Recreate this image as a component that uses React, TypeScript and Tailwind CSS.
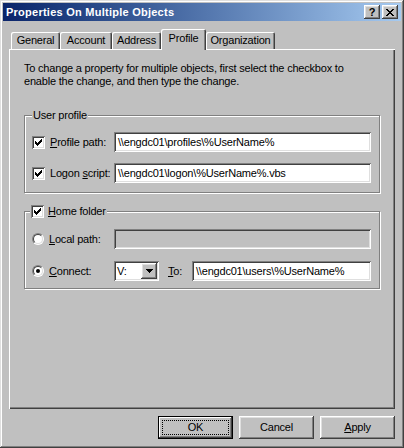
const raised =
  "shadow-[inset_-1px_-1px_0_#404040,inset_1px_1px_0_#fff,inset_-2px_-2px_0_#808080,inset_2px_2px_0_#dfdfdf]";
const sunken =
  "shadow-[inset_1px_1px_0_#808080,inset_-1px_-1px_0_#fff,inset_2px_2px_0_#404040,inset_-2px_-2px_0_#dfdfdf]";

function Check() {
  return (
    <span className={`flex h-[13px] w-[13px] shrink-0 items-center justify-center bg-white ${sunken}`}>
      <svg width="7" height="7" viewBox="0 0 7 7" shapeRendering="crispEdges">
        {[2, 3, 4, 3, 2, 1, 0].map((y, x) => (
          <rect key={x} x={x} y={y} width="1" height="3" fill="#000" />
        ))}
      </svg>
    </span>
  );
}

function Radio({ on }: { on?: boolean }) {
  return (
    <span className="flex h-[12px] w-[12px] shrink-0 items-center justify-center rounded-full border border-t-[#808080] border-l-[#808080] border-b-white border-r-white bg-[#dfdfdf]">
      <span className="flex h-[10px] w-[10px] items-center justify-center rounded-full border border-t-[#404040] border-l-[#404040] border-b-[#dfdfdf] border-r-[#dfdfdf] bg-white">
        {on && <span className="h-[4px] w-[4px] rounded-full bg-black" />}
      </span>
    </span>
  );
}

function Field({ value, width, disabled }: { value?: string; width: string; disabled?: boolean }) {
  return (
    <div
      className={`flex h-[20px] items-center px-[4px] whitespace-nowrap ${width} ${sunken} ${
        disabled ? "bg-[#c0c0c0]" : "bg-white"
      }`}
    >
      {value}
    </div>
  );
}

function Tab({ label, width, active }: { label: string; width: string; active?: boolean }) {
  return (
    <div
      className={`flex justify-center rounded-t-[2px] bg-[#c0c0c0] shadow-[inset_1px_1px_0_#fff,inset_-1px_0_0_#404040,inset_-2px_0_0_#808080] ${width} ${
        active ? "relative z-10 -mb-px h-[21px] pt-[3px]" : "h-[17px] pt-[2px]"
      }`}
    >
      {label}
    </div>
  );
}

function Button({ children, primary }: { children: React.ReactNode; primary?: boolean }) {
  return (
    <div
      className={`relative flex h-[23px] w-[75px] items-center justify-center ${
        primary
          ? "border border-black shadow-[inset_-1px_-1px_0_#404040,inset_1px_1px_0_#fff,inset_-2px_-2px_0_#808080]"
          : raised
      }`}
    >
      {children}
      {primary && <span className="absolute inset-[3px] border border-dotted border-black" />}
    </div>
  );
}

export default function App() {
  return (
    <div className="h-[448px] w-[404px] bg-[#c0c0c0] p-[3px] font-['Liberation_Sans',Arial,sans-serif] text-[11px] leading-[13px] tracking-[-0.2px] text-black shadow-[inset_-1px_-1px_0_#404040,inset_1px_1px_0_#dfdfdf,inset_-2px_-2px_0_#808080,inset_2px_2px_0_#fff]">
      {/* title bar */}
      <div className="flex h-[18px] items-center bg-linear-to-r from-[#0a246a] to-[#a6caf0] pl-[3px] pr-[3px]">
        <span className="flex-1 text-[11px] font-bold tracking-[0.25px] text-white">Properties On Multiple Objects</span>
        <div className="flex gap-[2px]">
          <div className={`flex h-[14px] w-[16px] items-center justify-center bg-[#c0c0c0] text-[11px] font-bold ${raised}`}>
            ?
          </div>
          <div className={`flex h-[14px] w-[16px] items-center justify-center bg-[#c0c0c0] ${raised}`}>
            <svg width="8" height="7" viewBox="0 0 8 7" shapeRendering="crispEdges">
              <path d="M0 0h2v1h1v1h2v-1h1v-1h2v1h-1v1h-1v1h-1v1h1v1h1v1h1v1h-2v-1h-1v-1h-2v1h-1v1h-2v-1h1v-1h1v-1h1v-1h-1v-1h-1v-1h-1z" fill="#000" />
            </svg>
          </div>
        </div>
      </div>

      <div className="pl-[6px] pt-[8px]">
        {/* tabs */}
        <div className="flex h-[20px] items-end pl-[2px]">
          <Tab label="General" width="w-[49px]" />
          <Tab label="Account" width="w-[52px]" />
          <Tab label="Address" width="w-[49px]" />
          <Tab label="Profile" width="w-[45px]" active />
          <Tab label="Organization" width="w-[69px]" />
        </div>

        {/* panel */}
        <div className="h-[360px] w-[386px] px-[15px] pt-[13px] shadow-[inset_1px_1px_0_#fff,inset_-1px_-1px_0_#404040,inset_-2px_-2px_0_#808080]">
          <p>
            To change a property for multiple objects, first select the checkbox to
            <br />
            enable the change, and then type the change.
          </p>

          {/* user profile */}
          <div className="relative mt-[27px] h-[78px] border border-[#808080] pt-[16px] pl-[7px] shadow-[inset_1px_1px_0_#fff,1px_1px_0_#fff]">
            <span className="absolute left-[7px] top-[-7px] bg-[#c0c0c0] px-[1px]">User profile</span>
            <div className="flex h-[20px] items-center">
              <Check />
              <span className="ml-[5px] w-[64px]">
                <u>P</u>rofile path:
              </span>
              <Field value="\\engdc01\profiles\%UserName%" width="w-[257px]" />
            </div>
            <div className="mt-[11px] flex h-[20px] items-center">
              <Check />
              <span className="ml-[5px] w-[64px]">
                Logon <u>s</u>cript:
              </span>
              <Field value="\\engdc01\logon\%UserName%.vbs" width="w-[257px]" />
            </div>
          </div>

          {/* home folder */}
          <div className="relative mt-[18px] h-[78px] border border-[#808080] pt-[17px] pl-[7px] shadow-[inset_1px_1px_0_#fff,1px_1px_0_#fff]">
            <div className="absolute left-[5px] top-[-7px] flex items-center gap-[4px] bg-[#c0c0c0] px-[1px]">
              <Check />
              <span>
                <u>H</u>ome folder
              </span>
            </div>
            <div className="flex h-[20px] items-center">
              <Radio />
              <span className="ml-[5px] w-[65px]">
                <u>L</u>ocal path:
              </span>
              <Field width="w-[257px]" disabled />
            </div>
            <div className="mt-[12px] flex h-[20px] items-center">
              <Radio on />
              <span className="ml-[5px] w-[65px]">
                <u>C</u>onnect:
              </span>
              <div className={`flex h-[20px] w-[45px] items-center justify-between bg-white pl-[3px] pr-[2px] ${sunken}`}>
                <span>V:</span>
                <div className={`flex h-[16px] w-[16px] items-center justify-center bg-[#c0c0c0] ${raised}`}>
                  <svg width="7" height="4" viewBox="0 0 7 4" shapeRendering="crispEdges">
                    <path d="M0 0h7v1h-1v1h-1v1h-1v1h-1v-1h-1v-1h-1v-1h-1z" fill="#000" />
                  </svg>
                </div>
              </div>
              <span className="ml-[9px] w-[24px]">
                <u>T</u>o:
              </span>
              <Field value="\\engdc01\users\%UserName%" width="w-[179px]" />
            </div>
          </div>
        </div>

        {/* buttons */}
        <div className="mt-[7px] flex w-[386px] justify-end gap-[6px]">
          <Button primary>OK</Button>
          <Button>Cancel</Button>
          <Button>
            <span>
              <u>A</u>pply
            </span>
          </Button>
        </div>
      </div>
    </div>
  );
}
